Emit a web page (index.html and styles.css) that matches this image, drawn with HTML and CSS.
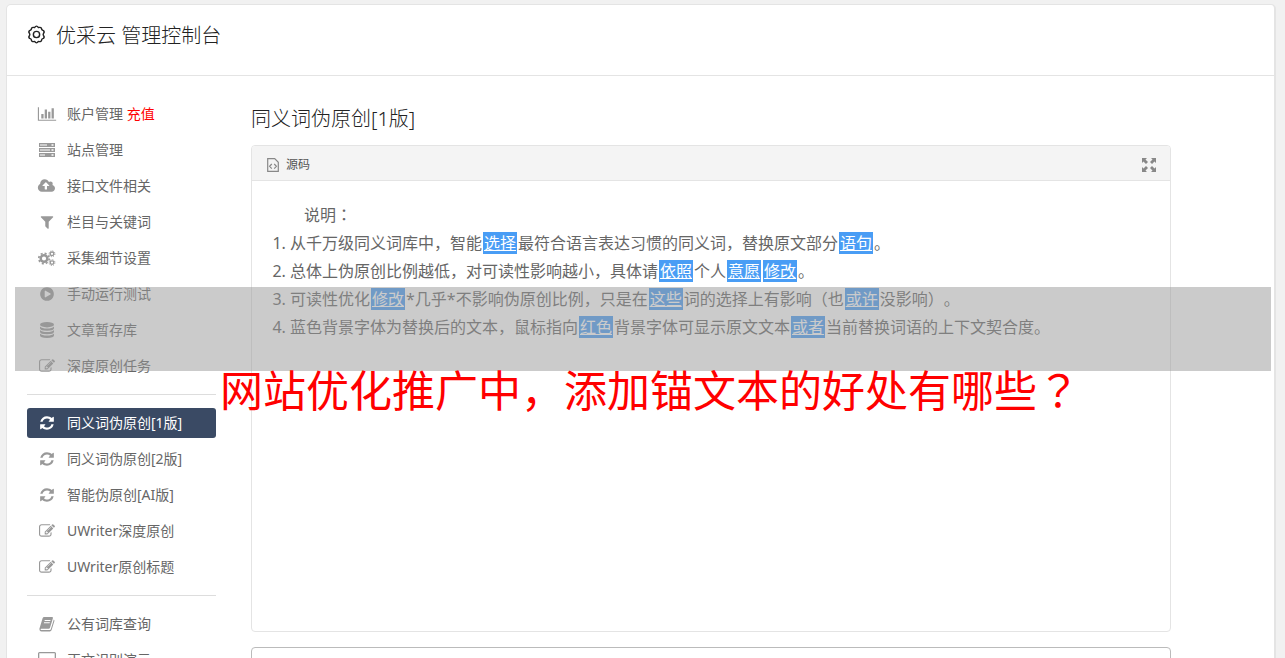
FILE: index.html
```html
<!DOCTYPE html>
<html lang="zh-CN">
<head>
  <meta charset="UTF-8">
  <meta name="viewport" content="width=device-width, initial-scale=1.0">
  <title>优采云 管理控制台</title>
  <link rel="stylesheet" href="styles.css">
</head>
<body>
  <!-- 图标 -->
  <svg class="defs" width="0" height="0">
    <symbol id="i-chart" viewBox="0 0 2048 1792"><path d="M640 896v512h-256v-512h256zm384-512v1024h-256v-1024h256zm1024 1152v128h-2048v-1536h128v1408h1920zm-640-896v768h-256v-768h256zm384-384v1152h-256v-1152h256z"/></symbol>
    <symbol id="i-server" viewBox="0 0 16 16"><path fill-rule="evenodd" d="M0 1h16v4H0zM1 2.500v1h7v-1zM12.500 2.200v1.500h2V2.200zM0 6h16v4H0zM1 7.500v1h10v-1zM12.500 7.200v1.500h2V7.200zM0 11h16v4H0zM1 12.500v1h5v-1zM12.500 12.200v1.500h2v-1.500z"/></symbol>
    <symbol id="i-cloud" viewBox="0 0 1920 1792"><path d="M1216 864q0-14-9-23l-352-352q-9-9-23-9t-23 9l-351 351q-10 12-10 24 0 14 9 23t23 9h224v352q0 13 9.500 22.500t22.500 9.500h192q13 0 22.500-9.500t9.500-22.500v-352h224q13 0 22.500-9.500t9.500-22.500zm640 288q0 159-112.500 271.500t-271.500 112.500h-1088q-185 0-316.500-131.500t-131.500-316.500q0-130 70-240t188-165q-2-30-2-43 0-212 150-362t362-150q156 0 285.500 87t188.500 231q71-62 166-62 106 0 181 75t75 181q0 76-41 138 130 31 213.500 135.500t83.500 238.500z"/></symbol>
    <symbol id="i-filter" viewBox="0 0 1792 1792"><path d="M1595 295q17 41-14 70l-493 493v742q0 42-39 59-13 5-25 5-27 0-45-19l-256-256q-19-19-19-45v-486l-493-493q-31-29-14-70 17-39 59-39h1280q42 0 59 39z"/></symbol>
    <symbol id="i-cogs" viewBox="0 0 18 16"><g fill="none" stroke="currentColor"><circle cx="6" cy="8.500" r="3.300" stroke-width="2.400"/><circle cx="6" cy="8.500" r="5.200" stroke-width="1.700" stroke-dasharray="2.040 2.040"/><circle cx="14" cy="3.800" r="1.800" stroke-width="1.300"/><circle cx="14" cy="3.800" r="2.900" stroke-width="1" stroke-dasharray="1.140 1.140"/><circle cx="14" cy="12.600" r="1.800" stroke-width="1.300"/><circle cx="14" cy="12.600" r="2.900" stroke-width="1" stroke-dasharray="1.140 1.140"/></g></symbol>
    <symbol id="i-play" viewBox="0 0 1792 1792"><path d="M896 128q209 0 385.500 103t279.500 279.500 103 385.500-103 385.500-279.500 279.500-385.500 103-385.500-103-279.500-279.500-103-385.500 103-385.500 279.500-279.500 385.500-103zm384 823q32-18 32-55t-32-55l-544-320q-31-19-64-1-32 19-32 56v640q0 37 32 56 16 8 32 8 17 0 32-9z"/></symbol>
    <symbol id="i-db" viewBox="0 0 16 16"><ellipse cx="8" cy="2.700" rx="7" ry="2.700"/><path d="M1 4.500q2 2 7 2t7-2v1.800q0 2.500-7 2.500t-7-2.500zM1 8q2 2 7 2t7-2v1.800q0 2.500-7 2.500t-7-2.500zM1 11.500q2 2 7 2t7-2v1.800q0 2.700-7 2.700t-7-2.700z"/></symbol>
    <symbol id="i-edit" viewBox="0 0 1792 1792"><path d="M888 1184l116-116-152-152-116 116v56h96v96h56zm440-720q-16-16-33 1l-350 350q-17 17-1 33t33-1l350-350q17-17 1-33zm80 594v190q0 119-84.500 203.500t-203.500 84.500h-832q-119 0-203.500-84.500t-84.500-203.500v-832q0-119 84.500-203.500t203.500-84.500h832q63 0 117 25 15 7 18 23 3 17-9 29l-49 49q-14 14-32 8-23-6-45-6h-832q-66 0-113 47t-47 113v832q0 66 47 113t113 47h832q66 0 113-47t47-113v-126q0-13 9-22l64-64q15-15 35-7t20 29zm-96-738l288 288-672 672h-288v-288zm444 132l-92 92-288-288 92-92q28-28 68-28t68 28l152 152q28 28 28 68t-28 68z"/></symbol>
    <symbol id="i-refresh" viewBox="-128 -128 1792 1792"><path d="M1511 928q0 5-1 7-64 268-268 434.500t-478 166.500q-146 0-282.500-55t-243.500-157l-129 129q-19 19-45 19t-45-19-19-45v-448q0-26 19-45t45-19h448q26 0 45 19t19 45-19 45l-137 137q71 66 161 102t187 36q134 0 250-65t186-179q11-17 53-117 8-23 30-23h192q13 0 22.500 9.500t9.500 22.500zm25-800v448q0 26-19 45t-45 19h-448q-26 0-45-19t-19-45 19-45l138-138q-148-137-349-137-134 0-250 65t-186 179q-11 17-53 117-8 23-30 23h-199q-13 0-22.500-9.500t-9.500-22.500v-7q65-268 270-434.500t480-166.500q146 0 284 55.500t245 156.500l130-129q19-19 45-19t45 19 19 45z"/></symbol>
    <symbol id="i-book" viewBox="0 0 16 16"><path fill-rule="evenodd" d="M5.200 1H13q1.300 0 .9 1.300l-2.900 9.500q-.3 1-1.400 1H2.200q-.7 0-.6.600.2.700 1 .7h8.200q.7 0 1-.8l3-9.900q.9.500.6 1.500l-2.800 9.200q-.4 1.400-1.800 1.400H2.500Q.5 15.500.4 13.300q0-.7.3-1.500L3.600 2.200Q4 1 5.200 1zM5.800 4l-.3 1h5.800l.3-1zM5.100 6.200l-.3 1h5.800l.3-1z"/></symbol>
    <symbol id="i-desktop" viewBox="0 0 18 16"><path fill-rule="evenodd" d="M1.500 0h15Q18 0 18 1.500v10q0 1.500-1.500 1.500H11l1 3H6l1-3H1.500Q0 13 0 11.500v-10Q0 0 1.500 0zM1.300 1.300v8.900h15.400V1.300z"/></symbol>
    <symbol id="i-gear" viewBox="0 0 20 20"><g fill="none" stroke="currentColor" stroke-width="1.500"><path d="M8 2.700Q10-.3 12 2.700q3.400-.8 3.500 2 .1.700 1.800 1.200 1.500 1.600 0 3.100-.6 1 0 2 1.500 1.500 0 3.100-1.700.5-1.800 1.200-.1 2.800-3.500 2-2 3-4 0-3.400.8-3.500-2-.1-.7-1.800-1.200-1.500-1.600 0-3.100.6-1 0-2-1.500-1.500 0-3.100 1.700-.5 1.800-1.200.1-2.800 3.500-2z" stroke-linejoin="round"/><circle cx="10" cy="10" r="3.300"/></g></symbol>
    <symbol id="i-code" viewBox="0 0 12 14"><path fill="none" stroke="currentColor" stroke-width="1.200" d="M.7.700h7l3.600 3.600v9H.7zM4.800 6L2.600 8.300l2.200 2.300M7.200 6l2.200 2.300-2.200 2.300"/></symbol>
    <symbol id="i-expand" viewBox="0 0 14 14"><path d="M0 0h5L3.500 1.500 6 4 4 6 1.500 3.500 0 5zM14 0v5l-1.500-1.500L10 6 8 4l2.500-2.500L9 0zM0 14V9l1.500 1.500L4 8l2 2-2.500 2.500L5 14zM14 14H9l1.500-1.500L8 10l2-2 2.500 2.500L14 9z"/></symbol>
  </svg>

  <div class="wrap">
    <header class="header">
      <svg class="gear"><use href="#i-gear"/></svg>
      <h1>优采云 管理控制台</h1>
    </header>
    <div class="content">
      <nav class="side">
        <ul>
          <li><a href="#"><svg><use href="#i-chart"/></svg>账户管理 <span class="red">充值</span></a></li>
          <li><a href="#"><svg><use href="#i-server"/></svg>站点管理</a></li>
          <li><a href="#"><svg><use href="#i-cloud"/></svg>接口文件相关</a></li>
          <li><a href="#"><svg><use href="#i-filter"/></svg>栏目与关键词</a></li>
          <li><a href="#"><svg><use href="#i-cogs"/></svg>采集细节设置</a></li>
          <li><a href="#"><svg><use href="#i-play"/></svg>手动运行测试</a></li>
          <li><a href="#"><svg><use href="#i-db"/></svg>文章暂存库</a></li>
          <li><a href="#"><svg><use href="#i-edit"/></svg>深度原创任务</a></li>
        </ul>
        <ul>
          <li><a href="#" class="cur"><svg><use href="#i-refresh"/></svg>同义词伪原创[1版]</a></li>
          <li><a href="#"><svg><use href="#i-refresh"/></svg>同义词伪原创[2版]</a></li>
          <li><a href="#"><svg><use href="#i-refresh"/></svg>智能伪原创[AI版]</a></li>
          <li><a href="#"><svg><use href="#i-edit"/></svg>UWriter深度原创</a></li>
          <li><a href="#"><svg><use href="#i-edit"/></svg>UWriter原创标题</a></li>
        </ul>
        <ul>
          <li><a href="#"><svg><use href="#i-book"/></svg>公有词库查询</a></li>
          <li><a href="#"><svg><use href="#i-desktop"/></svg>正文识别演示</a></li>
        </ul>
      </nav>
      <main class="main">
        <h2>同义词伪原创[1版]</h2>
        <div class="editor">
          <div class="toolbar">
            <button type="button" class="source"><svg><use href="#i-code"/></svg>源码</button>
            <button type="button" class="expand" aria-label="全屏"><svg><use href="#i-expand"/></svg></button>
          </div>
          <div class="article">
            <p>说明<span class="mid" lang="ja">：</span></p>
            <ol>
              <li>从千万级同义词库中，智能<a href="#">选择</a>最符合语言表达习惯的同义词，替换原文部分<a href="#">语句</a>。</li>
              <li>总体上伪原创比例越低，对可读性影响越小，具体请<a href="#">依照</a>个人<a href="#">意愿</a><a href="#">修改</a>。</li>
              <li>可读性优化<a href="#">修改</a>*几乎*不影响伪原创比例，只是在<a href="#">这些</a>词的选择上有影响（也<a href="#">或许</a>没影响）。</li>
              <li>蓝色背景字体为替换后的文本，鼠标指向<a href="#">红色</a>背景字体可显示原文文本<a href="#">或者</a>当前替换词语的上下文契合度。</li>
            </ol>
          </div>
        </div>
        <textarea class="result" aria-label="结果"></textarea>
      </main>
    </div>
  </div>

  <!-- 标题浮层 -->
  <div class="mask"></div>
  <div class="banner">网站优化推广中，添加锚文本的好处有哪些<span class="mid" lang="ja">？</span></div>
</body>
</html>
```

FILE: styles.css
```css
*{margin:0;padding:0;box-sizing:border-box;}
body{height:100vh;overflow:hidden;position:relative;background:#f1f1f1;color:#666;font:14px/30px "Noto Sans","Noto Sans CJK SC",sans-serif;text-spacing-trim:space-all;}
ul{list-style:none;}
a{color:inherit;text-decoration:none;}
button{border:0;background:none;font:inherit;color:inherit;cursor:pointer;}
svg{fill:currentColor;flex:none;}
.defs{position:absolute;}
/* 居中的全角标点 */
.mid{font-family:"Noto Sans CJK JP",sans-serif;line-height:1;}

.wrap{margin:4px 9px 0 6px;min-height:100vh;background:#fff;border:1px solid #e4e4e4;border-right-width:2px;border-radius:5px;}
.header{display:flex;align-items:flex-start;gap:10px;height:71px;padding:16px 20px 0;border-bottom:1px solid #e4e4e4;color:#222;}
.header h1{font-size:20px;line-height:30px;font-weight:300;}
.gear{width:19px;height:19px;margin-top:4px;}
.content{display:flex;gap:35px;padding:23px 103px 0 20px;}

/* 左侧菜单 */
.side{flex:none;width:189px;}
.side ul+ul{border-top:1px solid #ddd;margin-top:13px;padding-top:13px;}
.side li+li{margin-top:6px;}
.side a{display:flex;align-items:center;height:30px;padding-left:10px;border-radius:3px;white-space:pre;}
.side svg{width:20px;height:16px;margin-right:10px;color:#999;}
.side a.cur{background:#3a4a64;color:#fff;}
.side a.cur svg{color:#fff;}
.red{color:#f00;}

/* 编辑器 */
.main{flex:1;min-width:0;padding-top:5px;}
.main h2{font-size:20px;line-height:30px;font-weight:300;color:#222;margin-bottom:11px;}
.editor{border:1px solid #e4e4e4;border-radius:4px;min-height:487px;margin-bottom:15px;}
.toolbar{display:flex;justify-content:space-between;align-items:center;height:35px;padding:3px 14px 0 15px;background:#f4f4f4;border-bottom:1px solid #e4e4e4;border-radius:3px 3px 0 0;}
.source{display:flex;align-items:center;gap:7px;font-size:12px;color:#555;}
.source svg{width:12px;height:14px;color:#888;}
.expand{display:flex;color:#888;}
.expand svg{width:14px;height:14px;}
.article{padding:20px 20px;font-size:16px;line-height:28px;}
.article p{text-indent:2em;}
.article ol{padding-left:18px;}
.article li a{background:#499df5;color:#fff;padding:0 1px;margin:0 1px;text-decoration:underline;}
.result{display:block;width:100%;height:120px;border:1px solid #bbb;border-radius:4px;resize:none;}

/* 浮层 */
.mask{position:absolute;top:287px;left:15px;right:14px;height:84px;background:rgba(152,152,152,.5);}
.banner{position:absolute;top:361px;left:220px;right:0;color:#f00;font-size:43px;line-height:60px;white-space:nowrap;}
```
